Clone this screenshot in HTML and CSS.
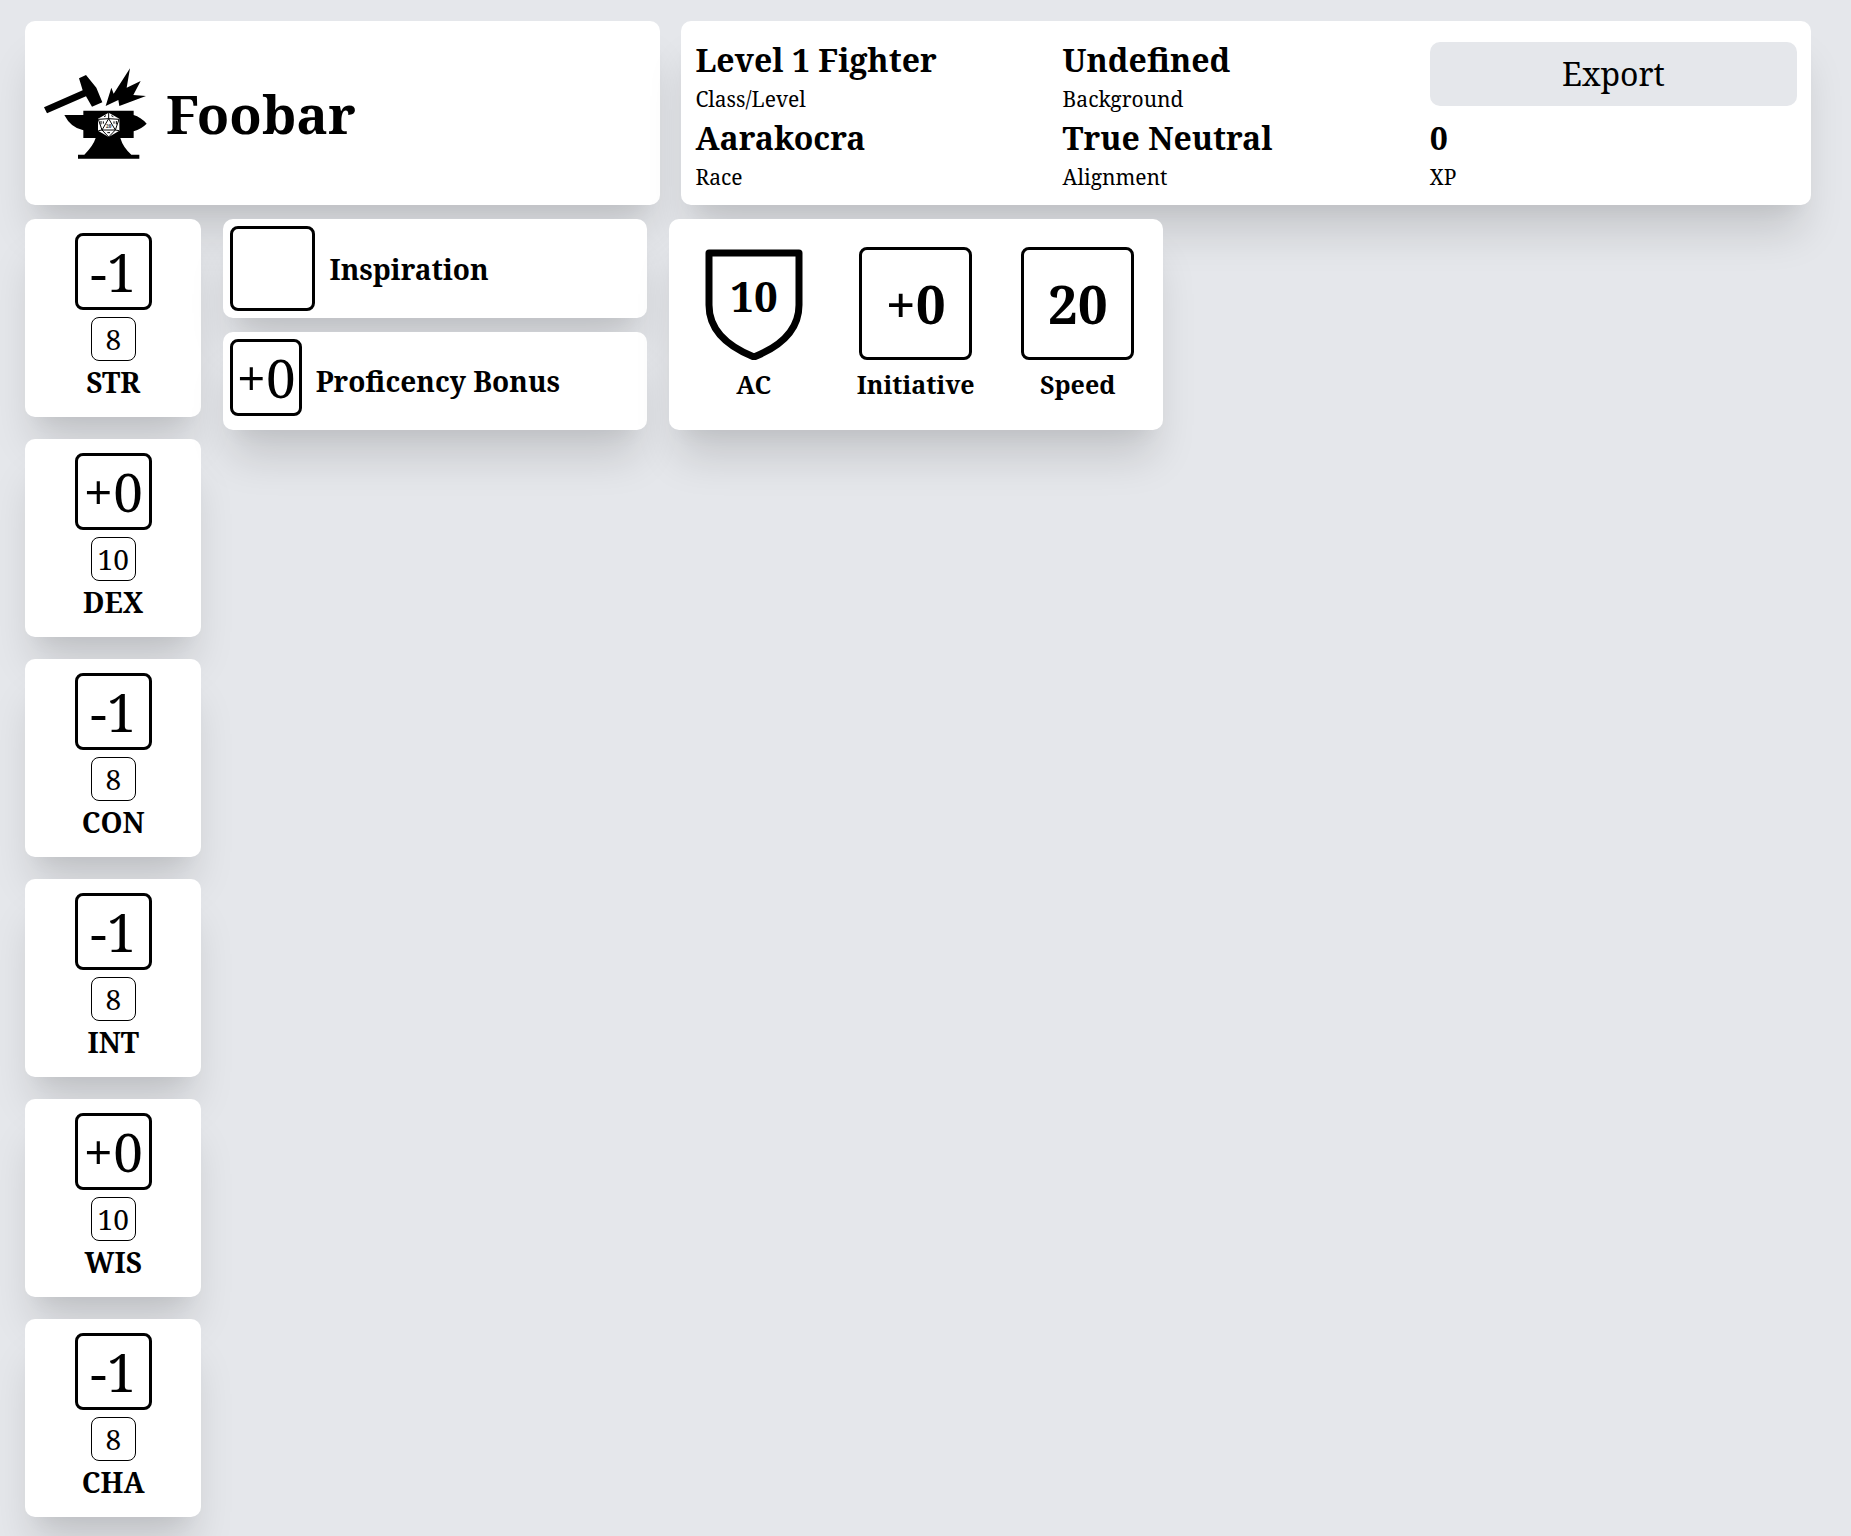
FILE: index.html
```html
<!DOCTYPE html>
<html lang="en">
<head>
    <meta charset="UTF-8">
    <meta name="viewport" content="width=device-width, initial-scale=1.0">
    <title>Foobar</title>
    <link rel="stylesheet" href="styles.css">
</head>
<body>
    <header class="top">
        <div class="card title">
            <svg class="logo" viewBox="27 20 339 339" aria-hidden="true">
                <!-- hammer -->
                <path d="M42 171L158 120L147 84L168 74L199 112L217 156L186 169L168 138L51 189Z"/>
                <!-- sparks -->
                <path d="M227 167L244 112L251 130L300 54L290 112L332 92L310 134L348 137L268 167L265 149Z"/>
                <!-- anvil -->
                <path d="M103 194H160V181H311V194Q332 200 350 220Q334 236 311 243V263H271Q279 291 304 313H328V325H144V313H163Q190 286 197 263H160V240Q122 232 103 194Z"/>
                <!-- d20 -->
                <path class="die" d="M236 187L268 205V241L236 260L204 241V205Z"/>
                <path class="die-lines" d="M236 187V205M205 207L236 205L267 207M236 205L216 239H256ZM205 207L216 239L205 241M267 207L256 239L267 241M216 239L236 260L256 239M213 212V222M220 213V220M252 213V220M259 212V222M222 199L228 196M244 196L250 199M232 247H240"/>
                <text class="die-number" x="236" y="234">20</text>
            </svg>
            <h1>Foobar</h1>
        </div>
        <div class="card info">
            <div>
                <h2>Level 1 Fighter</h2>
                <p>Class/Level</p>
            </div>
            <div>
                <h2>Undefined</h2>
                <p>Background</p>
            </div>
            <button class="export" type="button">Export</button>
            <div>
                <h2>Aarakocra</h2>
                <p>Race</p>
            </div>
            <div>
                <h2>True Neutral</h2>
                <p>Alignment</p>
            </div>
            <div>
                <h2>0</h2>
                <p>XP</p>
            </div>
        </div>
    </header>

    <main class="sheet">
        <section class="abilities">
            <div class="card ability">
                <div class="modifier">-1</div>
                <div class="score">8</div>
                <h3>STR</h3>
            </div>
            <div class="card ability">
                <div class="modifier">+0</div>
                <div class="score">10</div>
                <h3>DEX</h3>
            </div>
            <div class="card ability">
                <div class="modifier">-1</div>
                <div class="score">8</div>
                <h3>CON</h3>
            </div>
            <div class="card ability">
                <div class="modifier">-1</div>
                <div class="score">8</div>
                <h3>INT</h3>
            </div>
            <div class="card ability">
                <div class="modifier">+0</div>
                <div class="score">10</div>
                <h3>WIS</h3>
            </div>
            <div class="card ability">
                <div class="modifier">-1</div>
                <div class="score">8</div>
                <h3>CHA</h3>
            </div>
        </section>

        <section class="bonuses">
            <div class="card bonus">
                <div class="inspiration"></div>
                <h3>Inspiration</h3>
            </div>
            <div class="card bonus">
                <div class="proficiency">+0</div>
                <h3>Proficency Bonus</h3>
            </div>
        </section>

        <section class="card combat">
            <div class="stat">
                <svg class="shield" viewBox="0 0 113 113">
                    <path d="M12 6H102V58C102 84 82 100 57 110C32 100 12 84 12 58Z"/>
                    <text x="57" y="65">10</text>
                </svg>
                <h4>AC</h4>
            </div>
            <div class="stat">
                <div class="value">+0</div>
                <h4>Initiative</h4>
            </div>
            <div class="stat">
                <div class="value">20</div>
                <h4>Speed</h4>
            </div>
        </section>
    </main>
</body>
</html>
```
FILE: styles.css
```css
* {
    box-sizing: border-box;
    margin: 0;
}
body {
    padding: 21px 40px 20px 25px;
    background-color: #e5e7eb;
    color: #000;
    font-family: "Noto Serif", "DejaVu Serif Condensed", "Liberation Serif", serif;
    font-size: 28px;
    line-height: 42px;
}
h1, h2, h3, h4 {
    font-size: inherit;
    font-weight: bold;
}
.card {
    background-color: #fff;
    border-radius: 10px;
    box-shadow: 0 35px 44px -9px rgba(0, 0, 0, 0.14), 0 14px 18px -11px rgba(0, 0, 0, 0.05);
}

/* header */
.top {
    display: grid;
    grid-template-columns: 9fr 16fr;
    gap: 21px;
    margin-bottom: 14px;
}
.title {
    display: flex;
    align-items: center;
    gap: 14px;
    padding: 14px;
}
.title h1 {
    font-size: 53px;
    line-height: 65px;
}
.logo {
    width: 113px;
    height: 113px;
}
.die {
    fill: #fff;
}
.die-lines {
    fill: none;
    stroke: #000;
    stroke-width: 3;
}
.die-number {
    font-size: 14px;
    font-weight: bold;
    text-anchor: middle;
}
.info {
    display: grid;
    grid-template-columns: repeat(3, 1fr);
    align-items: center;
    padding: 14px;
}
.info h2 {
    font-size: 32px;
    line-height: 50px;
}
.info p {
    font-size: 21px;
    line-height: 28px;
}
.export {
    padding: 7px;
    border: none;
    border-radius: 10px;
    background-color: #e5e7eb;
    color: inherit;
    font-family: inherit;
    font-size: 32px;
    line-height: 50px;
    cursor: pointer;
}

/* character sheet */
.sheet {
    display: grid;
    grid-template-columns: 20fr 48fr 56fr 71fr;
    align-items: start;
    gap: 22px;
}
.abilities {
    display: flex;
    flex-direction: column;
    gap: 22px;
}
.ability {
    display: flex;
    flex-direction: column;
    align-items: center;
    padding: 14px;
}
.modifier, .proficiency {
    padding: 3px;
    border: 3px solid #000;
    border-radius: 8px;
    font-size: 53px;
    line-height: 65px;
    text-align: center;
}
.modifier {
    width: 77px;
    margin-bottom: 7px;
}
.score {
    width: 45px;
    border: 1px solid #000;
    border-radius: 8px;
    text-align: center;
}
.bonuses {
    display: flex;
    flex-direction: column;
    gap: 14px;
}
.bonus {
    display: flex;
    align-items: flex-start;
    gap: 14px;
    min-height: 98px;
    padding: 7px;
}
.bonus h3 {
    align-self: center;
}
.inspiration {
    width: 85px;
    height: 85px;
    border: 3px solid #000;
    border-radius: 8px;
}
.combat {
    display: grid;
    grid-template-columns: repeat(3, 1fr);
    padding: 28px 4px;
}
.stat {
    display: flex;
    flex-direction: column;
    align-items: center;
    gap: 7px;
}
.stat h4 {
    font-size: 25px;
    line-height: 35px;
}
.value {
    width: 113px;
    height: 113px;
    border: 3px solid #000;
    border-radius: 8px;
    font-size: 53px;
    font-weight: bold;
    line-height: 107px;
    text-align: center;
}
.shield {
    width: 113px;
    height: 113px;
}
.shield path {
    fill: none;
    stroke: #000;
    stroke-width: 7;
    stroke-linejoin: round;
}
.shield text {
    font-size: 42px;
    font-weight: bold;
    text-anchor: middle;
}
```
